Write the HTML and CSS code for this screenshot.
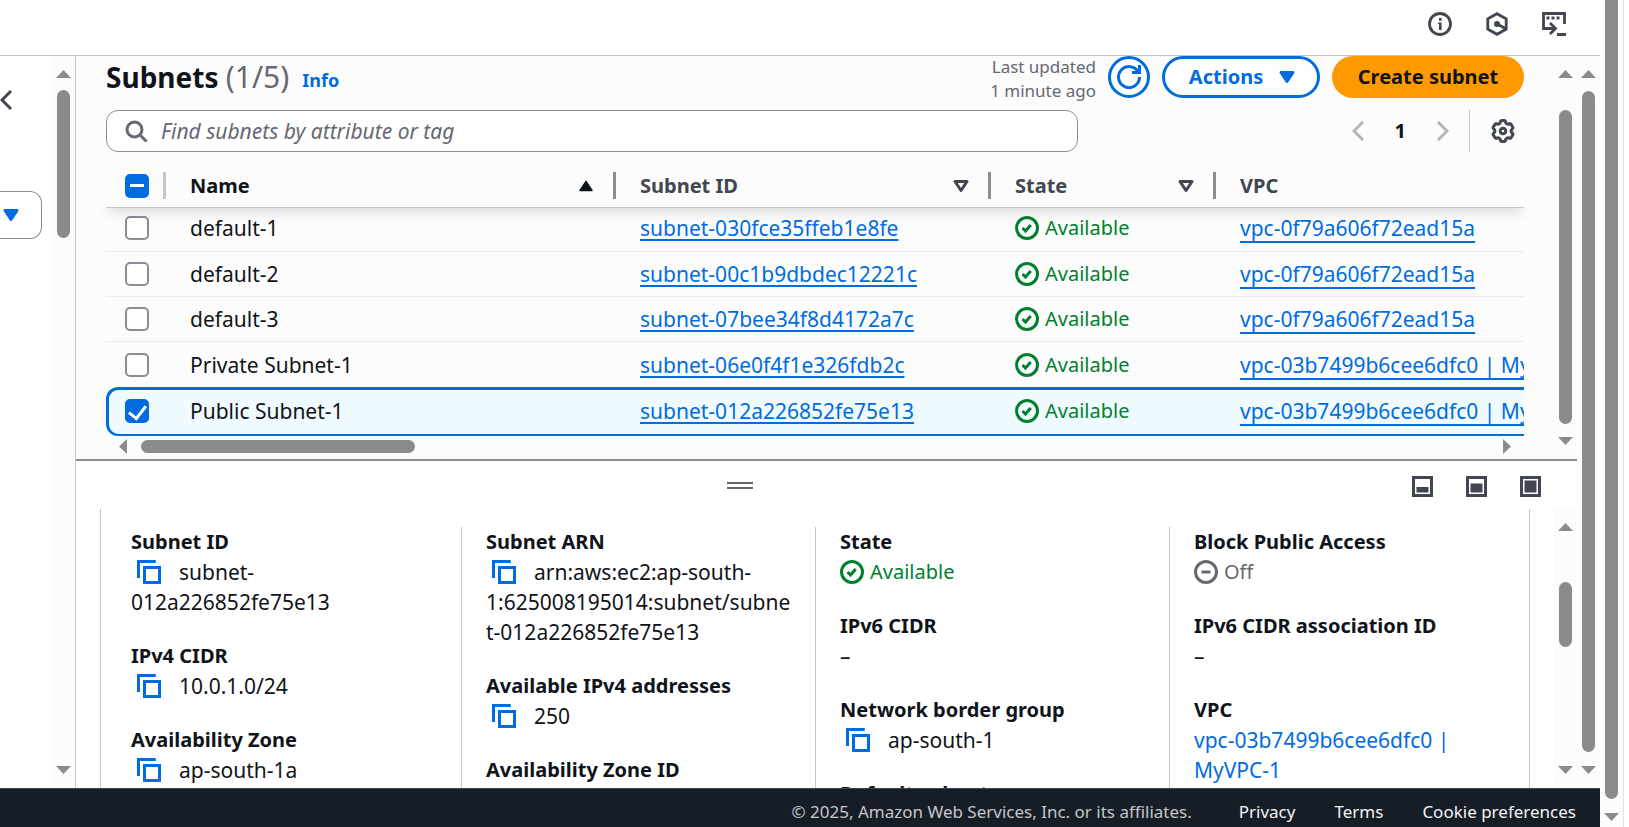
FILE: index.html
```html
<!DOCTYPE html>
<html lang="en">
<head>
<meta charset="utf-8">
<title>Subnets | VPC Console</title>
<link rel="stylesheet" href="styles.css">
</head>
<body>
<svg class="defs" aria-hidden="true">
  <symbol id="ok" viewBox="0 0 16 16"><circle cx="8" cy="8" r="7"/><path d="m5 8 2 2 3.5-4"/></symbol>
  <symbol id="off" viewBox="0 0 16 16"><circle cx="8" cy="8" r="7"/><path d="M5 8h6"/></symbol>
  <symbol id="copy" viewBox="0 0 16 16"><path d="M12.500 1H1v11M5 5h10v10H5z"/></symbol>
  <symbol id="down" viewBox="0 0 16 16"><path d="M4 5h8l-4 6z"/></symbol>
  <symbol id="up" viewBox="0 0 16 16"><path d="M4 11h8L8 5z"/></symbol>
</svg>
<div class="page">
  <header class="topbar">
    <button class="icon-btn" aria-label="Information"><svg class="icon" viewBox="0 0 24 24"><circle cx="12" cy="12" r="10.500" stroke-width="2.800"/><path d="M12.300 6v2.800M12.300 10.500V18" stroke-width="2.600"/><path d="M10 11.300h2" stroke-width="1.200"/></svg></button>
    <button class="icon-btn" aria-label="Diagnostics"><svg class="icon" viewBox="0 0 24 24"><path d="m12 1.700 9.200 5.200v10.200L12 22.300l-9.200-5.200V6.900z" stroke-width="2.800"/><circle cx="12" cy="12" r="2" class="solid"/><path d="m12 12 8.500 4.500" stroke-width="2.800"/></svg></button>
    <button class="icon-btn" aria-label="CloudShell"><svg class="icon" viewBox="0 0 24 24"><path d="M13 16.500H1.500v-15h21V12M15 22.500h9" stroke-width="2.800"/><path d="M4.500 6h13" stroke-width="3" stroke-dasharray="3 2"/><path d="m8 11 5.500 5.500L8 22" stroke-width="2.800"/></svg></button>
  </header>
  <div class="main">
    <aside class="side">
      <div class="side-body">
        <button class="collapse" aria-label="Collapse navigation"><svg viewBox="0 0 12 20"><path d="M11 1 2 10l9 9"/></svg></button>
        <button class="side-select" aria-label="Filter by VPC"><svg class="icon solid-icon"><use href="#down"/></svg></button>
      </div>
      <div class="vbar"><i class="arrow up"></i><i class="thumb side-thumb"></i><i class="arrow dn"></i></div>
    </aside>
    <main class="content">
      <section class="list">
        <div class="list-body">
          <div class="title-row">
            <h1>Subnets <span>(1/5)</span></h1><a class="info" href="#">Info</a>
            <p class="updated">Last updated<br>1 minute ago</p>
            <button class="btn refresh" aria-label="Refresh"><svg class="icon" viewBox="0 0 16 16"><path d="M10 5h5V0M15 8a7 7 0 1 1-.7-3"/></svg></button>
            <button class="btn actions">Actions <svg class="icon solid-icon"><use href="#down"/></svg></button>
            <button class="btn primary">Create subnet</button>
          </div>
          <div class="tools">
            <label class="search"><svg class="icon" viewBox="0 0 16 16"><circle cx="7" cy="7" r="5"/><path d="m11 11 4 4"/></svg><input type="search" aria-label="Find subnets" placeholder="Find subnets by attribute or tag"></label>
            <nav class="pager" aria-label="Pages">
              <button aria-label="Previous page"><svg viewBox="0 0 12 20"><path d="M11 1 2 10l9 9"/></svg></button>
              <button class="current">1</button>
              <button aria-label="Next page"><svg viewBox="0 0 12 20"><path d="m1 1 9 9-9 9"/></svg></button>
            </nav>
            <button class="settings" aria-label="Preferences"><svg class="icon" viewBox="0 0 24 24"><path d="M9.500 2.500q.3-1 1.300-1h2.400q1 0 1.300 1l.5 1.800 1.800 1 1.800-.5q1-.2 1.500.6l1.600 2.700q.5.900-.2 1.600L20.200 11v2l1.300 1.300q.7.700.2 1.600l-1.600 2.700q-.5.800-1.500.6l-1.800-.5-1.800 1-.5 1.800q-.3 1-1.300 1h-2.400q-1 0-1.300-1L9 19.700l-1.800-1-1.800.5q-1 .2-1.500-.6l-1.600-2.700q-.5-.9.2-1.600L3.800 13v-2L2.500 9.700q-.7-.7-.2-1.600l1.600-2.700q.5-.8 1.500-.6l1.800.5 1.800-1z"/><circle cx="12" cy="12" r="2.800"/></svg></button>
          </div>
          <table>
            <colgroup><col class="c-check"><col class="c-name"><col class="c-id"><col class="c-state"><col></colgroup>
            <thead><tr>
              <th class="check"><input type="checkbox" class="mixed" aria-label="Select all"></th>
              <th class="sorted"><div>Name<svg class="icon solid-icon"><use href="#up"/></svg></div></th>
              <th><div>Subnet ID<svg class="icon sort"><use href="#down"/></svg></div></th>
              <th><div>State<svg class="icon sort"><use href="#down"/></svg></div></th>
              <th class="last"><div>VPC</div></th>
            </tr></thead>
            <tbody>
              <tr class="first"><td class="check"><input type="checkbox" aria-label="default-1"></td><td>default-1</td><td><a href="#">subnet-030fce35ffeb1e8fe</a></td><td><span class="status"><svg class="icon"><use href="#ok"/></svg>Available</span></td><td class="vpc"><a href="#">vpc-0f79a606f72ead15a</a></td></tr>
              <tr><td class="check"><input type="checkbox" aria-label="default-2"></td><td>default-2</td><td><a href="#">subnet-00c1b9dbdec12221c</a></td><td><span class="status"><svg class="icon"><use href="#ok"/></svg>Available</span></td><td class="vpc"><a href="#">vpc-0f79a606f72ead15a</a></td></tr>
              <tr><td class="check"><input type="checkbox" aria-label="default-3"></td><td>default-3</td><td><a href="#">subnet-07bee34f8d4172a7c</a></td><td><span class="status"><svg class="icon"><use href="#ok"/></svg>Available</span></td><td class="vpc"><a href="#">vpc-0f79a606f72ead15a</a></td></tr>
              <tr class="before"><td class="check"><input type="checkbox" aria-label="Private Subnet-1"></td><td>Private Subnet-1</td><td><a href="#">subnet-06e0f4f1e326fdb2c</a></td><td><span class="status"><svg class="icon"><use href="#ok"/></svg>Available</span></td><td class="vpc"><a href="#">vpc-03b7499b6cee6dfc0 | MyVPC-1</a></td></tr>
              <tr class="selected"><td class="check"><input type="checkbox" checked aria-label="Public Subnet-1"></td><td>Public Subnet-1</td><td><a href="#">subnet-012a226852fe75e13</a></td><td><span class="status"><svg class="icon"><use href="#ok"/></svg>Available</span></td><td class="vpc"><a href="#">vpc-03b7499b6cee6dfc0 | MyVPC-1</a></td></tr>
            </tbody>
          </table>
          <div class="hbar"><i class="arrow lt"></i><i class="thumb"></i><i class="arrow rt"></i></div>
        </div>
        <div class="vbar"><i class="arrow up"></i><i class="thumb list-thumb"></i><i class="arrow dn"></i></div>
      </section>
      <section class="split">
        <div class="split-bar">
          <button class="grip" aria-label="Resize panel"></button>
          <div class="sizes">
            <button aria-label="Small panel"><svg viewBox="0 0 21 21"><path d="M1.500 1.500h18v18h-18z"/><path class="fill" d="M4.500 11h12v5.500h-12z"/></svg></button>
            <button aria-label="Medium panel"><svg viewBox="0 0 21 21"><path d="M1.500 1.500h18v18h-18z"/><path class="fill" d="M4.500 7.500h12v9h-12z"/></svg></button>
            <button aria-label="Full panel"><svg viewBox="0 0 21 21"><path d="M1.500 1.500h18v18h-18z"/><path class="fill" d="M4.500 4.500h12v12h-12z"/></svg></button>
          </div>
        </div>
        <div class="split-body">
          <div class="card">
            <dl>
              <div><dt>Subnet ID</dt><dd><button class="copy" aria-label="Copy subnet ID"><svg class="icon"><use href="#copy"/></svg></button>subnet-012a226852fe75e13</dd></div>
              <div><dt>IPv4 CIDR</dt><dd><button class="copy" aria-label="Copy IPv4 CIDR"><svg class="icon"><use href="#copy"/></svg></button>10.0.1.0/24</dd></div>
              <div><dt>Availability Zone</dt><dd><button class="copy" aria-label="Copy Availability Zone"><svg class="icon"><use href="#copy"/></svg></button>ap-south-1a</dd></div>
            </dl>
            <dl>
              <div><dt>Subnet ARN</dt><dd><button class="copy" aria-label="Copy ARN"><svg class="icon"><use href="#copy"/></svg></button>arn:aws:ec2:ap-south-1:625008195014:subnet/subnet-012a226852fe75e13</dd></div>
              <div><dt>Available IPv4 addresses</dt><dd><button class="copy" aria-label="Copy available addresses"><svg class="icon"><use href="#copy"/></svg></button>250</dd></div>
              <div><dt>Availability Zone ID</dt><dd></dd></div>
            </dl>
            <dl>
              <div><dt>State</dt><dd><span class="status"><svg class="icon"><use href="#ok"/></svg>Available</span></dd></div>
              <div><dt>IPv6 CIDR</dt><dd>–</dd></div>
              <div><dt>Network border group</dt><dd><button class="copy" aria-label="Copy border group"><svg class="icon"><use href="#copy"/></svg></button>ap-south-1</dd></div>
              <div><dt>Default subnet</dt><dd></dd></div>
            </dl>
            <dl>
              <div><dt>Block Public Access</dt><dd><span class="status muted"><svg class="icon"><use href="#off"/></svg>Off</span></dd></div>
              <div><dt>IPv6 CIDR association ID</dt><dd>–</dd></div>
              <div><dt>VPC</dt><dd><a href="#">vpc-03b7499b6cee6dfc0 | MyVPC-1</a></dd></div>
            </dl>
          </div>
          <div class="vbar"><i class="arrow up"></i><i class="thumb split-thumb"></i><i class="arrow dn"></i></div>
        </div>
      </section>
    </main>
    <div class="vbar outer"><i class="arrow up"></i><i class="thumb outer-thumb"></i><i class="arrow dn"></i></div>
  </div>
  <footer>
    <span>© 2025, Amazon Web Services, Inc. or its affiliates.</span>
    <a href="#">Privacy</a><a href="#">Terms</a><a href="#">Cookie preferences</a>
  </footer>
  <div class="page-bar"><i class="thumb"></i><i class="arrow dn"></i></div>
</div>
</body>
</html>
```
FILE: styles.css
```css
* { box-sizing: border-box; }
body {
  margin: 0;
  font: 20px/30px "Noto Sans", "Open Sans", sans-serif;
  color: #0f141a;
  background: #fff;
}
.defs { position: absolute; width: 0; height: 0; }
button {
  font: inherit;
  color: inherit;
  background: none;
  border: 0;
  padding: 0;
  display: flex;
  align-items: center;
  justify-content: center;
}
svg { display: block; fill: none; stroke: currentColor; stroke-width: 2; flex: none; }
.icon { width: 24px; height: 24px; }
.solid { fill: currentColor; }
.solid-icon { fill: currentColor; stroke-linejoin: round; stroke-width: 1; }
a { color: #006ce0; }

.page {
  display: grid;
  grid-template: 56px minmax(0, 1fr) 39px / minmax(0, 1fr) 29px;
  height: 100vh;
}
.topbar {
  grid-area: 1 / 1;
  display: flex;
  justify-content: flex-end;
  align-items: center;
  gap: 33px;
  padding: 0 34px 7px 0;
  border-bottom: 1px solid #c6c6cd;
  color: #424650;
}
.main { grid-area: 2 / 1; display: flex; min-height: 0; }

/* scrollbars */
.vbar {
  flex: none;
  width: 23px;
  display: flex;
  flex-direction: column;
  align-items: center;
  padding: 14px 0;
  background: #fcfcfc;
}
.thumb { display: block; background: #8b8b8b; border-radius: 7px; }
.vbar .thumb { width: 13px; }
.arrow { display: block; flex: none; background: #8b8b8b; }
.arrow.up, .arrow.dn { width: 15px; height: 8px; }
.arrow.lt, .arrow.rt { width: 8px; height: 15px; }
.up { clip-path: polygon(50% 0, 100% 100%, 0 100%); }
.dn { clip-path: polygon(0 0, 100% 0, 50% 100%); }
.lt { clip-path: polygon(100% 0, 100% 100%, 0 50%); }
.rt { clip-path: polygon(0 0, 100% 50%, 0 100%); }
.vbar .dn { margin-top: auto; }
.side-thumb { height: 148px; margin-top: 12px; }
.list-thumb { flex: 1; margin: 32px 0 13px; }
.outer-thumb { flex: 1; margin: 13px 0 14px; }
.split-thumb { height: 65px; margin-top: 51px; }

.side { flex: none; width: 76px; display: flex; border-right: 1px solid #c6c6cd; }
.side-body { flex: 1; padding-top: 34px; }
.collapse { color: #424650; }
.collapse svg { width: 12px; height: 20px; stroke-width: 3; }
.side-select {
  width: 42px;
  height: 48px;
  margin-top: 81px;
  padding-right: 20px;
  border: 1px solid #8c8c94;
  border-left: 0;
  border-radius: 0 12px 12px 0;
  color: #006ce0;
}
.side-select .icon, .actions .icon { stroke-width: 2; }

.content { flex: 1; min-width: 0; display: flex; flex-direction: column; background: #fcfcfc; }
.list { display: flex; }
.list-body { flex: 1; min-width: 0; padding: 0 30px; }
.title-row { display: flex; align-items: center; height: 42px; }
h1 { margin: 0; font-size: 28px; line-height: 36px; }
h1 span { font-size: 30px; font-weight: 400; color: #656871; }
.info { margin: 6px auto 0 13px; font-size: 18px; font-weight: 700; text-decoration: none; }
.updated { margin: 4px 12px 0 0; font-size: 17px; line-height: 24px; color: #656871; text-align: right; }
.btn { height: 42px; border-radius: 21px; font-weight: 700; }
.refresh { width: 42px; border: 3px solid #006ce0; color: #006ce0; background: #fff; }
.actions { width: 158px; margin: 0 12px; padding-left: 6px; gap: 12px; border: 3px solid #006ce0; color: #006ce0; background: #fff; }
.primary { width: 192px; background: #f90; }

.tools { display: flex; align-items: center; margin-top: 12px; }
.search {
  flex: 0 1 972px;
  height: 42px;
  display: flex;
  align-items: center;
  gap: 13px;
  padding: 0 17px;
  border: 1px solid #8c8c94;
  border-radius: 12px;
  background: #fff;
  color: #656871;
}
.search input { flex: 1; border: 0; padding: 0; outline: 0; font: inherit; font-size: 21px; background: none; }
.search input::placeholder { color: #656871; opacity: 1; font-style: italic; }
.pager { display: flex; align-items: center; gap: 31px; margin-left: auto; color: #b4b4bb; }
.pager svg { width: 12px; height: 20px; stroke-width: 3; }
.current { font-weight: 700; color: #0f141a; }
.settings { height: 42px; margin-left: 20px; padding: 0 9px 0 21px; border-left: 1px solid #c6c6cd; color: #424650; }
.settings svg { stroke-width: 3; stroke-linejoin: round; }

table { width: 100%; table-layout: fixed; border-collapse: separate; border-spacing: 0; margin-top: 12px; }
.c-check { width: 60px; }
.c-name { width: 450px; }
.c-id { width: 375px; }
.c-state { width: 225px; }
thead {
  position: relative;
  box-shadow: 0 6px 12px -2px #00070f22;
  clip-path: polygon(0 0, 100% 0, 100% 100%, calc(100% + 12px) 100%, calc(100% + 12px) calc(100% + 20px), -12px calc(100% + 20px), -12px 100%, 0 100%);
}
th { height: 44px; padding: 0; text-align: left; background: #fcfcfc; border-bottom: 1px solid #c6c6cd; color: #424650; }
th div { display: flex; align-items: center; justify-content: space-between; height: 27px; padding: 0 15px 0 24px; border-right: 3px solid #8c8c94; }
th.last div { border-right: 0; }
.sorted { color: #0f141a; }
.sort { stroke-linejoin: round; }
td { height: 45px; padding: 0 0 0 24px; border-bottom: 1px solid #ebebf0; white-space: nowrap; overflow: hidden; }
td, dd { font-size: 21px; }
.first td { height: 44px; padding-bottom: 3px; }
.before td { border-bottom: 0; }
th.check, td.check { padding-left: 19px; }
th.check { background-image: linear-gradient(#c6c6cd, #c6c6cd); background-size: 3px 27px; background-position: 57px 8px; background-repeat: no-repeat; }
input[type="checkbox"] {
  appearance: none;
  display: block;
  width: 24px;
  height: 24px;
  margin: 0;
  border: 2px solid #8c8c94;
  border-radius: 5px;
  background: #fff;
}
input.mixed { border-color: #006ce0; background: linear-gradient(#fff, #fff) center / 14px 3px no-repeat #006ce0; }
input[type="checkbox"]:checked { border-color: #006ce0; background: #006ce0; }
input:checked::after {
  content: "";
  display: block;
  width: 8px;
  height: 14px;
  margin: 1px auto;
  border: solid #fff;
  border-width: 0 3px 3px 0;
  transform: rotate(38deg);
}
td a { text-decoration: underline 2px; text-underline-offset: 3px; text-decoration-skip-ink: none; }
.vpc a { text-underline-offset: 5px; }
.status { display: flex; align-items: center; gap: 6px; font-size: 20px; color: #00802f; }
.muted { color: #656871; }
.selected td { height: 49px; background: #f0fbff; border-top: 3px solid #006ce0; border-bottom: 2px solid #006ce0; padding-bottom: 3px; }
.selected td.check { border-left: 3px solid #006ce0; border-radius: 12px 0 0 12px; padding-left: 16px; }

.hbar { display: flex; align-items: center; height: 23px; padding: 0 13px 2px; }
.hbar .thumb { width: 274px; height: 13px; margin: 0 auto 0 14px; }

.split { flex: 1; min-height: 0; display: flex; flex-direction: column; border-top: 2px solid #8c8c94; background: #fff; }
.split-bar { flex: none; height: 48px; display: grid; grid-template-columns: 1fr auto; align-items: center; gap: 8px; padding-right: 36px; color: #424650; }
.grip { width: 26px; height: 7px; justify-self: center; border: solid #656871; border-width: 2px 0; }
.sizes { display: flex; gap: 33px; padding-top: 3px; }
.sizes svg { width: 21px; height: 21px; stroke-width: 3; }
.sizes .fill { fill: currentColor; stroke: none; }
.split-body { flex: 1; min-height: 0; display: flex; }
.card {
  flex: 1;
  min-width: 0;
  overflow: hidden;
  display: grid;
  grid-template-columns: repeat(4, minmax(0, 1fr));
  margin: 0 24px;
  padding: 18px 6px 0;
  border: solid #c6c6cd;
  border-width: 0 1px;
}
dl { display: flex; flex-direction: column; gap: 24px; margin: 0; padding: 0 24px; border-left: 1px solid #c6c6cd; }
dl:first-child { border-left: 0; }
dt { font-weight: 700; }
dd { margin: 0; min-height: 30px; overflow-wrap: anywhere; }
dd a { text-decoration: none; }
dd .status { height: 30px; }
.copy { display: inline-flex; vertical-align: middle; height: 24px; margin: -4px 18px 0 6px; color: #006ce0; }

footer {
  grid-area: 3 / 1;
  display: flex;
  align-items: center;
  justify-content: flex-end;
  gap: 39px;
  padding: 7px 24px 0 0;
  border-top: 1px solid #424650;
  background: #161d26;
  font-size: 17px;
  color: #c6c6cd;
}
footer span { margin-right: 8px; }
footer a { color: #f3f3f7; text-decoration: none; }
.page-bar { grid-area: 1 / 2 / 4 / 3; display: flex; flex-direction: column; align-items: center; margin-right: 5px; padding-bottom: 6px; border-right: 1px solid #e4e4e8; background: #fcfcfc; }
.page-bar .thumb { flex: 1; width: 13px; margin-bottom: 14px; border-radius: 0 0 7px 7px; }
```
